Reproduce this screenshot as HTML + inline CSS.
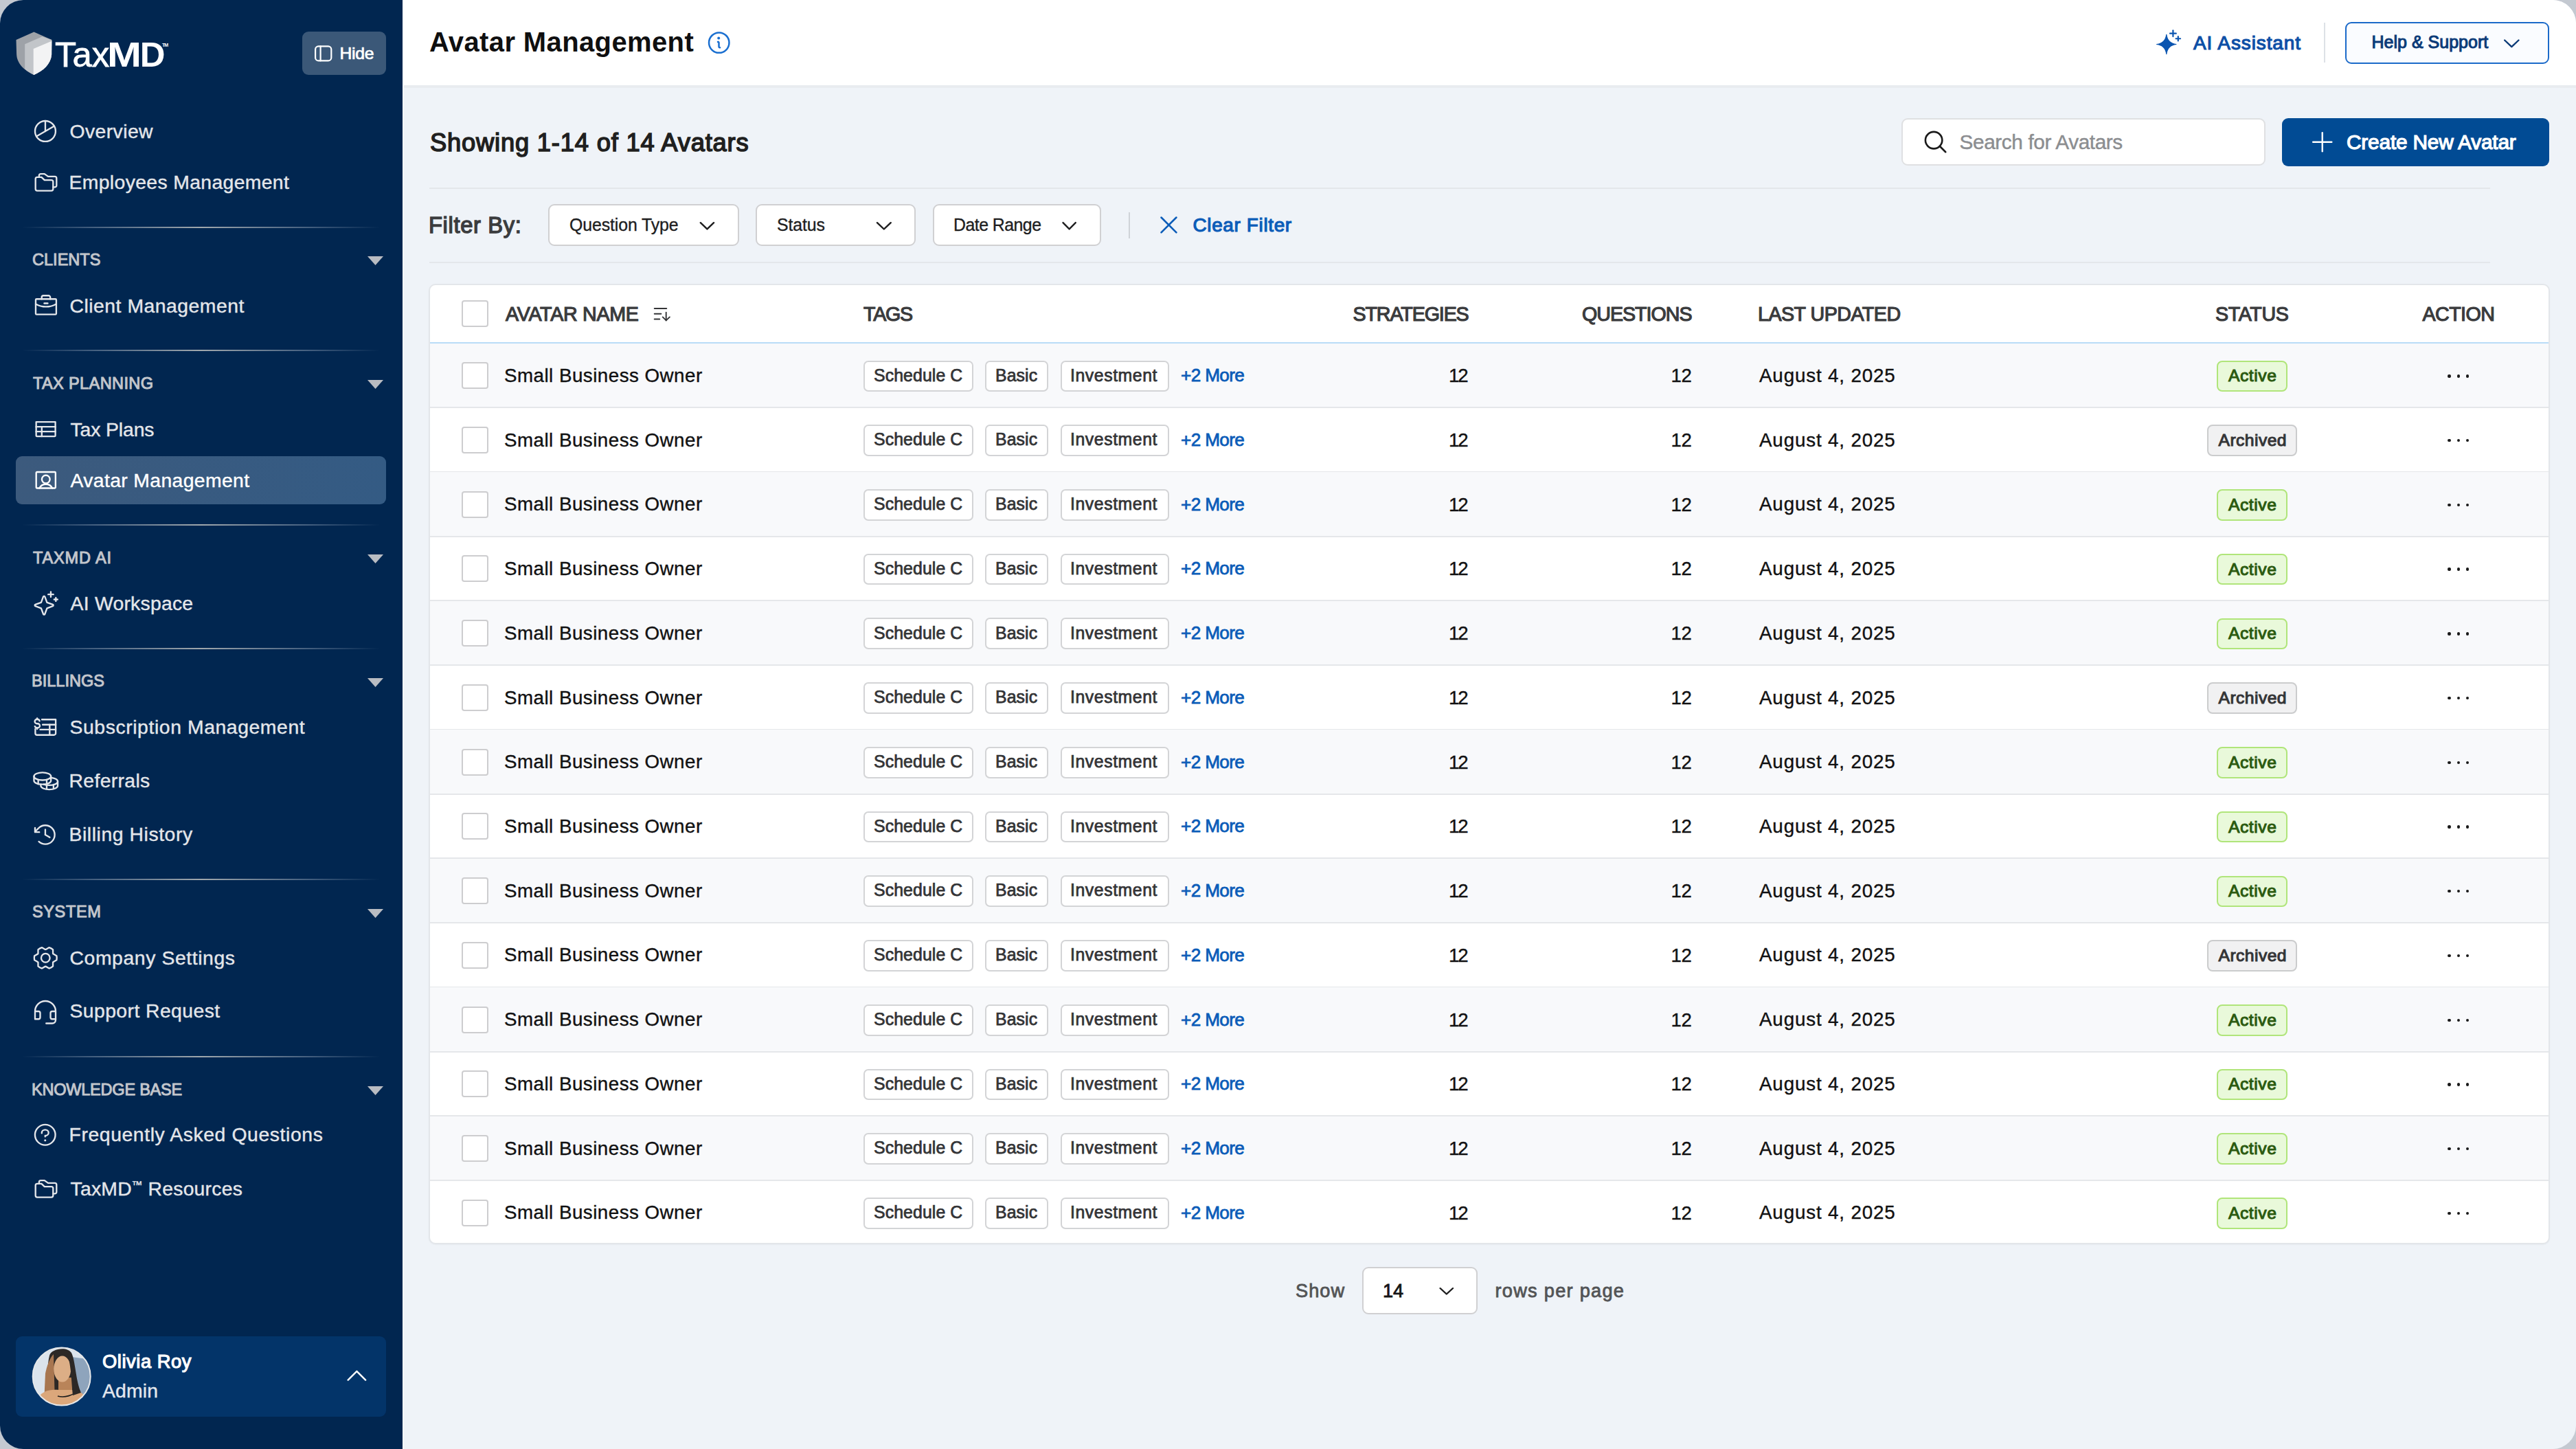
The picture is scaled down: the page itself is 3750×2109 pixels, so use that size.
<!DOCTYPE html>
<html><head><meta charset="utf-8"><title>Avatar Management</title>
<style>
html,body{margin:0;padding:0;}
body{width:3750px;height:2109px;overflow:hidden;background:#c4c9d1;font-family:"Liberation Sans",sans-serif;}
#app{position:absolute;left:0;top:0;width:3750px;height:2109px;border-radius:34px;overflow:hidden;background:#eff3f8;}
.t{position:absolute;white-space:nowrap;}
.b{position:absolute;box-sizing:border-box;}
</style></head><body><div id="app">
<div class="b" style="left:0.00px;top:0.00px;width:586.00px;height:2109.00px;background:#012650"></div><div class="b" style="left:586.00px;top:0.00px;width:2.20px;height:2109.00px;background:#ffffff"></div><svg style="position:absolute;left:15px;top:40px;width:70px;height:75px" viewBox="0 0 70 75"><path d="M34.4,6.5 L60.3,17.9 L60.1,39.4 C59,53 48,63 34.4,68.9 C21,63 9.5,53 9.1,38.8 L8.5,17.9 Z" fill="#9ea2a8"/><path d="M21.2,24.3 L46.5,13.2 L60.3,17.9 L60.1,39.4 C59,53 48,63 34.4,68.9 C30,67 25,64 21.2,60.5 Z" fill="#c2c5c9"/><path d="M33.7,31.1 L60.3,19.7 L60.1,39.4 C59,53 48,63 34.4,68.9 L33.7,68.5 Z" fill="#f3f3f4"/></svg><span id="logo1" class="t" style="left:80.00px;top:55.46px;font-size:50.87px;line-height:50.87px;font-weight:400;color:#ffffff;letter-spacing:0.000px;-webkit-text-stroke:0.8px #ffffff">Tax</span><span id="logo2" class="t" style="left:156.30px;top:55.46px;font-size:50.87px;line-height:50.87px;font-weight:700;color:#ffffff;letter-spacing:0.000px;"><span style="display:inline-block;transform:scaleX(1.18);transform-origin:0 0;margin-right:5px">M</span>D</span><span id="tm" class="t" style="left:236.00px;top:62.00px;font-size:7.00px;line-height:7.00px;font-weight:700;color:#ffffff;letter-spacing:-1.000px;">TM</span><div class="b" style="left:440.00px;top:46.00px;width:122.00px;height:63.00px;background:#3b5878;border-radius:9px"></div><svg style="position:absolute;left:450px;top:58px;width:40px;height:40px;overflow:visible" viewBox="0 0 40 40" fill="none" stroke="#ffffff" color="#ffffff" stroke-width="2.2" stroke-linecap="round" stroke-linejoin="round"><rect x="9.1" y="9.4" width="23.2" height="21" rx="4.5"/><line x1="16.6" y1="9.4" x2="16.6" y2="30.4"/></svg><span id="hide" class="t" style="left:494.50px;top:65.71px;font-size:24.71px;line-height:24.71px;font-weight:400;color:#ffffff;letter-spacing:-0.267px;-webkit-text-stroke:0.74px #ffffff;">Hide</span><span id="ov" class="t" style="left:101.50px;top:176.71px;font-size:28.34px;line-height:28.34px;font-weight:400;color:#e4e6ea;letter-spacing:0.429px;-webkit-text-stroke:0.40px #e4e6ea;">Overview</span><svg style="position:absolute;left:46.43px;top:170.93px;width:39.93px;height:39.93px;overflow:visible" viewBox="0 0 256 256" preserveAspectRatio="none" fill="none" stroke="#e4e6ea" color="#e4e6ea" stroke-width="15.07" stroke-linecap="round" stroke-linejoin="round"><circle cx="128" cy="128" r="96"/><line x1="128" y1="128" x2="128" y2="32"/><line x1="44.86" y1="176" x2="211.14" y2="80"/></svg><span id="emp" class="t" style="left:100.50px;top:250.90px;font-size:28.34px;line-height:28.34px;font-weight:400;color:#e4e6ea;letter-spacing:0.368px;-webkit-text-stroke:0.40px #e4e6ea;">Employees Management</span><svg style="position:absolute;left:40px;top:240px;width:60px;height:50px;overflow:visible" viewBox="0 0 60 50" fill="none" stroke="#e4e6ea" color="#e4e6ea" stroke-width="2.35" stroke-linecap="round" stroke-linejoin="round"><path d="M11.7,35.1V20.4a2.5,2.5,0,0,1,2.5-2.5H20.4L24.8,22.1H34.8a2.5,2.5,0,0,1,2.5,2.5V35.1a2.5,2.5,0,0,1-2.5,2.5H14.2a2.5,2.5,0,0,1-2.5-2.5Z"/><path d="M16.9,17.9V15.6a2.5,2.5,0,0,1,2.5-2.5H24.8L30,16.9H39.8a2.5,2.5,0,0,1,2.5,2.5V29.9a2.5,2.5,0,0,1-2.5,2.5H37.3"/></svg><div class="b" style="left:32.00px;top:330.10px;width:521.00px;height:1.80px;background:linear-gradient(90deg,rgba(150,165,185,0.0),rgba(150,165,185,0.45) 20%,rgba(200,200,196,0.8) 50%,rgba(150,165,185,0.45) 80%,rgba(150,165,185,0.0))"></div><span id="clients" class="t" style="left:47.00px;top:367.21px;font-size:23.55px;line-height:23.55px;font-weight:400;color:#c3c6cc;letter-spacing:0.000px;-webkit-text-stroke:0.99px #c3c6cc;">CLIENTS</span><svg style="position:absolute;left:535px;top:373.0px;width:23px;height:13px" viewBox="0 0 23 13"><path d="M0,0 L23,0 L11.5,13 Z" fill="#b9bcc2"/></svg><span id="cm" class="t" style="left:101.50px;top:430.90px;font-size:28.34px;line-height:28.34px;font-weight:400;color:#e4e6ea;letter-spacing:0.513px;-webkit-text-stroke:0.40px #e4e6ea;">Client Management</span><svg style="position:absolute;left:46.74px;top:423.89px;width:39.91px;height:39.91px;overflow:visible" viewBox="0 0 256 256" preserveAspectRatio="none" fill="none" stroke="#e4e6ea" color="#e4e6ea" stroke-width="15.07" stroke-linecap="round" stroke-linejoin="round"><rect x="32" y="72" width="192" height="144" rx="8"/><path d="M168,72V56a16,16,0,0,0-16-16H104A16,16,0,0,0,88,56V72"/><path d="M224,118.31A191.09,191.09,0,0,1,128,144a191.14,191.14,0,0,1-96-25.68"/><line x1="112" y1="112" x2="144" y2="112"/></svg><div class="b" style="left:32.00px;top:509.10px;width:521.00px;height:1.80px;background:linear-gradient(90deg,rgba(150,165,185,0.0),rgba(150,165,185,0.45) 20%,rgba(200,200,196,0.8) 50%,rgba(150,165,185,0.45) 80%,rgba(150,165,185,0.0))"></div><span id="taxp" class="t" style="left:48.00px;top:546.71px;font-size:23.55px;line-height:23.55px;font-weight:400;color:#c3c6cc;letter-spacing:0.364px;-webkit-text-stroke:0.99px #c3c6cc;">TAX PLANNING</span><svg style="position:absolute;left:535px;top:553.0px;width:23px;height:13px" viewBox="0 0 23 13"><path d="M0,0 L23,0 L11.5,13 Z" fill="#b9bcc2"/></svg><div class="b" style="left:23.00px;top:664.00px;width:539.00px;height:70.00px;background:linear-gradient(90deg,#3c5a7d,#345b84);border-radius:9px"></div><span id="tp" class="t" style="left:102.50px;top:610.90px;font-size:28.34px;line-height:28.34px;font-weight:400;color:#e4e6ea;letter-spacing:-0.100px;-webkit-text-stroke:0.40px #e4e6ea;">Tax Plans</span><svg style="position:absolute;left:47.86px;top:606.01px;width:37.28px;height:37.28px;overflow:visible" viewBox="0 0 256 256" preserveAspectRatio="none" fill="none" stroke="#e4e6ea" color="#e4e6ea" stroke-width="16.14" stroke-linecap="round" stroke-linejoin="round"><path d="M32,56H224V192a8,8,0,0,1-8,8H40a8,8,0,0,1-8-8V56Z"/><line x1="32" y1="104" x2="224" y2="104"/><line x1="32" y1="152" x2="224" y2="152"/><line x1="88" y1="104" x2="88" y2="200"/></svg><span id="am" class="t" style="left:102.50px;top:684.51px;font-size:28.34px;line-height:28.34px;font-weight:400;color:#ffffff;letter-spacing:0.375px;-webkit-text-stroke:0.40px #ffffff;">Avatar Management</span><svg style="position:absolute;left:47.92px;top:680.47px;width:37.57px;height:37.57px;overflow:visible" viewBox="0 0 256 256" preserveAspectRatio="none" fill="none" stroke="#ffffff" color="#ffffff" stroke-width="16.01" stroke-linecap="round" stroke-linejoin="round"><circle cx="128" cy="120" r="40"/><path d="M63.8,208a72,72,0,0,1,128.4,0"/><rect x="32" y="48" width="192" height="160" rx="8"/></svg><div class="b" style="left:32.00px;top:763.10px;width:521.00px;height:1.80px;background:linear-gradient(90deg,rgba(150,165,185,0.0),rgba(150,165,185,0.45) 20%,rgba(200,200,196,0.8) 50%,rgba(150,165,185,0.45) 80%,rgba(150,165,185,0.0))"></div><span id="taxai" class="t" style="left:48.00px;top:800.71px;font-size:23.55px;line-height:23.55px;font-weight:400;color:#c3c6cc;letter-spacing:0.857px;-webkit-text-stroke:0.99px #c3c6cc;">TAXMD AI</span><svg style="position:absolute;left:535px;top:807.0px;width:23px;height:13px" viewBox="0 0 23 13"><path d="M0,0 L23,0 L11.5,13 Z" fill="#b9bcc2"/></svg><span id="aiw" class="t" style="left:102.50px;top:864.31px;font-size:28.34px;line-height:28.34px;font-weight:400;color:#e4e6ea;letter-spacing:0.255px;-webkit-text-stroke:0.40px #e4e6ea;">AI Workspace</span><svg style="position:absolute;left:46.77px;top:859.15px;width:39.23px;height:39.23px;overflow:visible" viewBox="0 0 256 256" preserveAspectRatio="none" fill="none" stroke="#e4e6ea" color="#e4e6ea" stroke-width="15.34" stroke-linecap="round" stroke-linejoin="round"><path d="M84.27,171.73l-55.09-20.3a7.92,7.92,0,0,1,0-14.86l55.09-20.3,20.3-55.09a7.92,7.92,0,0,1,14.86,0l20.3,55.09,55.09,20.3a7.92,7.92,0,0,1,0,14.86l-55.09,20.3-20.3,55.09a7.92,7.92,0,0,1-14.86,0Z"/><line x1="176" y1="16" x2="176" y2="64"/><line x1="200" y1="40" x2="152" y2="40"/><line x1="224" y1="72" x2="224" y2="104"/><line x1="240" y1="88" x2="208" y2="88"/></svg><div class="b" style="left:32.00px;top:943.10px;width:521.00px;height:1.80px;background:linear-gradient(90deg,rgba(150,165,185,0.0),rgba(150,165,185,0.45) 20%,rgba(200,200,196,0.8) 50%,rgba(150,165,185,0.45) 80%,rgba(150,165,185,0.0))"></div><span id="bill" class="t" style="left:46.00px;top:980.41px;font-size:23.55px;line-height:23.55px;font-weight:400;color:#c3c6cc;letter-spacing:-0.000px;-webkit-text-stroke:0.99px #c3c6cc;">BILLINGS</span><svg style="position:absolute;left:535px;top:987.0px;width:23px;height:13px" viewBox="0 0 23 13"><path d="M0,0 L23,0 L11.5,13 Z" fill="#b9bcc2"/></svg><span id="sub" class="t" style="left:101.50px;top:1043.51px;font-size:28.34px;line-height:28.34px;font-weight:400;color:#e4e6ea;letter-spacing:0.591px;-webkit-text-stroke:0.40px #e4e6ea;">Subscription Management</span><svg style="position:absolute;left:40px;top:1030px;width:60px;height:50px;overflow:visible" viewBox="0 0 60 50" fill="none" stroke="#e4e6ea" color="#e4e6ea" stroke-width="2.35" stroke-linecap="round" stroke-linejoin="round"><path d="M21,17.25H41.1V37.2a2.5,2.5,0,0,1-2.5,2.5H13.9a2.5,2.5,0,0,1-2.5-2.5V31"/><line x1="22.1" y1="24.7" x2="41.1" y2="24.7"/><line x1="18.6" y1="31.9" x2="41.1" y2="31.9"/><line x1="32.3" y1="24.7" x2="32.3" y2="39.7"/><path d="M17.6,19.3a3.2,3.2,0,0,0-3.3-2.3h-0.6a3.1,3.1,0,0,0,0,6.2h1.2a3.1,3.1,0,0,1,0,6.2h-0.7a3.3,3.3,0,0,1-3.4-2.3"/><line x1="14.1" y1="15.3" x2="14.1" y2="17"/><line x1="14.1" y1="29.4" x2="14.1" y2="31.0"/></svg><span id="ref" class="t" style="left:100.50px;top:1121.60px;font-size:28.34px;line-height:28.34px;font-weight:400;color:#e4e6ea;letter-spacing:0.350px;-webkit-text-stroke:0.40px #e4e6ea;">Referrals</span><svg style="position:absolute;left:46.74px;top:1116.64px;width:39.52px;height:39.52px;overflow:visible" viewBox="0 0 256 256" preserveAspectRatio="none" fill="none" stroke="#e4e6ea" color="#e4e6ea" stroke-width="15.22" stroke-linecap="round" stroke-linejoin="round"><ellipse cx="96" cy="84" rx="80" ry="36"/><path d="M16,84v40c0,19.88,35.82,36,80,36s80-16.12,80-36V84"/><line x1="56" y1="117" x2="56" y2="157"/><path d="M176,96.72c36.52,3.34,64,17.86,64,35.28,0,19.88-35.82,36-80,36-19.6,0-37.56-3.17-51.47-8.44"/><path d="M80,159.28V172c0,19.88,35.82,36,80,36s80-16.12,80-36V132"/><line x1="200" y1="161" x2="200" y2="201"/><line x1="136" y1="117" x2="136" y2="201"/></svg><span id="bh" class="t" style="left:100.50px;top:1199.51px;font-size:28.34px;line-height:28.34px;font-weight:400;color:#e4e6ea;letter-spacing:0.571px;-webkit-text-stroke:0.40px #e4e6ea;">Billing History</span><svg style="position:absolute;left:46.18px;top:1194.85px;width:39.89px;height:39.89px;overflow:visible" viewBox="0 0 256 256" preserveAspectRatio="none" fill="none" stroke="#e4e6ea" color="#e4e6ea" stroke-width="15.08" stroke-linecap="round" stroke-linejoin="round"><line x1="128" y1="80" x2="128" y2="128"/><line x1="169.57" y1="152" x2="128" y2="128"/><polyline points="72 104 32 104 32 64"/><path d="M67.6,192A88,88,0,1,0,65.77,65.77L32,99.55"/></svg><div class="b" style="left:32.00px;top:1279.10px;width:521.00px;height:1.80px;background:linear-gradient(90deg,rgba(150,165,185,0.0),rgba(150,165,185,0.45) 20%,rgba(200,200,196,0.8) 50%,rgba(150,165,185,0.45) 80%,rgba(150,165,185,0.0))"></div><span id="sys" class="t" style="left:47.00px;top:1316.41px;font-size:23.55px;line-height:23.55px;font-weight:400;color:#c3c6cc;letter-spacing:0.600px;-webkit-text-stroke:0.99px #c3c6cc;">SYSTEM</span><svg style="position:absolute;left:535px;top:1323.0px;width:23px;height:13px" viewBox="0 0 23 13"><path d="M0,0 L23,0 L11.5,13 Z" fill="#b9bcc2"/></svg><span id="cs" class="t" style="left:101.50px;top:1379.90px;font-size:28.34px;line-height:28.34px;font-weight:400;color:#e4e6ea;letter-spacing:0.600px;-webkit-text-stroke:0.40px #e4e6ea;">Company Settings</span><svg style="position:absolute;left:45.77px;top:1374.12px;width:40.55px;height:40.55px;overflow:visible" viewBox="0 0 256 256" preserveAspectRatio="none" fill="none" stroke="#e4e6ea" color="#e4e6ea" stroke-width="14.84" stroke-linecap="round" stroke-linejoin="round"><circle cx="128" cy="128" r="40"/><path d="M130.05,206.11c-1.34,0-2.69,0-4,0L94,224a104.61,104.61,0,0,1-34.11-19.2l-.12-36c-.71-1.12-1.38-2.25-2-3.41L25.9,147.24a99.15,99.15,0,0,1,0-38.46l31.84-18.1c.65-1.150,1.32-2.29,2-3.41l.16-36A104.58,104.58,0,0,1,94,32l32,17.89c1.34,0,2.69,0,4,0L162,32a104.61,104.61,0,0,1,34.11,19.2l.12,36c.71,1.12,1.38,2.25,2,3.41l31.8,18.1a99.15,99.15,0,0,1,0,38.46l-31.84,18.1c-.65,1.15-1.32,2.29-2,3.41l-.16,36A104.58,104.580,0,0,1,162,224Z"/></svg><span id="sr" class="t" style="left:101.50px;top:1457.40px;font-size:28.34px;line-height:28.34px;font-weight:400;color:#e4e6ea;letter-spacing:0.429px;-webkit-text-stroke:0.40px #e4e6ea;">Support Request</span><svg style="position:absolute;left:46.14px;top:1452.19px;width:40.03px;height:40.03px;overflow:visible" viewBox="0 0 256 256" preserveAspectRatio="none" fill="none" stroke="#e4e6ea" color="#e4e6ea" stroke-width="15.03" stroke-linecap="round" stroke-linejoin="round"><path d="M224,128H192a16,16,0,0,0-16,16v40a16,16,0,0,0,16,16h32V128a96,96,0,1,0-192,0v72H64a16,16,0,0,0,16-16V144a16,16,0,0,0-16-16H32"/><path d="M224,200v8a32,32,0,0,1-32,32H136"/></svg><div class="b" style="left:32.00px;top:1537.10px;width:521.00px;height:1.80px;background:linear-gradient(90deg,rgba(150,165,185,0.0),rgba(150,165,185,0.45) 20%,rgba(200,200,196,0.8) 50%,rgba(150,165,185,0.45) 80%,rgba(150,165,185,0.0))"></div><span id="kb" class="t" style="left:46.00px;top:1574.71px;font-size:23.55px;line-height:23.55px;font-weight:400;color:#c3c6cc;letter-spacing:-0.246px;-webkit-text-stroke:0.99px #c3c6cc;">KNOWLEDGE BASE</span><svg style="position:absolute;left:535px;top:1581.0px;width:23px;height:13px" viewBox="0 0 23 13"><path d="M0,0 L23,0 L11.5,13 Z" fill="#b9bcc2"/></svg><span id="faq" class="t" style="left:100.50px;top:1637.31px;font-size:28.34px;line-height:28.34px;font-weight:400;color:#e4e6ea;letter-spacing:0.600px;-webkit-text-stroke:0.40px #e4e6ea;">Frequently Asked Questions</span><svg style="position:absolute;left:46.23px;top:1632.23px;width:39.53px;height:39.53px;overflow:visible" viewBox="0 0 256 256" preserveAspectRatio="none" fill="none" stroke="#e4e6ea" color="#e4e6ea" stroke-width="15.22" stroke-linecap="round" stroke-linejoin="round"><circle cx="128" cy="128" r="96"/><circle cx="128" cy="180" r="10" fill="currentColor" stroke="none"/><path d="M128,144v-8c17.67,0,32-12.54,32-28s-14.33-28-32-28S96,92.54,96,108v4"/></svg><span id="res" class="t" style="left:102.50px;top:1710.95px;font-size:28.34px;line-height:28.34px;font-weight:400;color:#e4e6ea;letter-spacing:0.240px;-webkit-text-stroke:0.40px #e4e6ea;">TaxMD<span style="font-size:55%;vertical-align:0.62em;letter-spacing:0">™</span> Resources</span><svg style="position:absolute;left:40px;top:1705px;width:60px;height:50px;overflow:visible" viewBox="0 0 60 50" fill="none" stroke="#e4e6ea" color="#e4e6ea" stroke-width="2.35" stroke-linecap="round" stroke-linejoin="round"><path d="M11.7,35.1V20.4a2.5,2.5,0,0,1,2.5-2.5H20.4L24.8,22.1H34.8a2.5,2.5,0,0,1,2.5,2.5V35.1a2.5,2.5,0,0,1-2.5,2.5H14.2a2.5,2.5,0,0,1-2.5-2.5Z"/><path d="M16.9,17.9V15.6a2.5,2.5,0,0,1,2.5-2.5H24.8L30,16.9H39.8a2.5,2.5,0,0,1,2.5,2.5V29.9a2.5,2.5,0,0,1-2.5,2.5H37.3"/></svg><div class="b" style="left:23.00px;top:1945.00px;width:539.00px;height:117.00px;background:#033469;border-radius:9px"></div><svg style="position:absolute;left:46px;top:1959px;width:88px;height:88px" viewBox="0 0 88 88"><defs><clipPath id="cc"><circle cx="43.7" cy="44.5" r="41.8"/></clipPath></defs><g clip-path="url(#cc)"><rect width="88" height="88" fill="#dbe3ec"/><path d="M58,16 L88,20 L88,80 L58,80 Z" fill="#8ea4bc"/><path d="M26,14 C28,4 52,0 58,10 C64,22 64,50 72,68 L60,74 L30,80 C22,60 22,30 26,14 Z" fill="#2c2826"/><path d="M20,40 C22,30 26,18 32,12 L34,84 L18,84 Z" fill="#a87650"/><rect x="39" y="46" width="20" height="26" fill="#b98459"/><ellipse cx="44.7" cy="33.6" rx="12.5" ry="19" fill="#dcae86"/><path d="M4,88 C8,70 20,62 40,64 L62,64 C74,66 80,74 84,88 Z" fill="#dba77b"/><path d="M38,73 C48,76 60,72 70,64" stroke="#1c1c1c" stroke-width="1.6" fill="none"/><path d="M52,10 C60,20 62,46 66,62 L72,68 L60,72 C58,56 58,30 52,10 Z" fill="#2c2826"/></g><circle cx="43.7" cy="44.5" r="42" fill="none" stroke="#e6e8ea" stroke-width="2"/></svg><span id="olivia" class="t" style="left:149.00px;top:1968.01px;font-size:27.33px;line-height:27.33px;font-weight:400;color:#ffffff;letter-spacing:0.556px;-webkit-text-stroke:1.15px #ffffff;">Olivia Roy</span><span id="admin" class="t" style="left:149.00px;top:2010.31px;font-size:28.34px;line-height:28.34px;font-weight:400;color:#e3e7ee;letter-spacing:0.150px;-webkit-text-stroke:0.40px #e3e7ee;">Admin</span><svg style="position:absolute;left:499.05px;top:1982.70px;width:40.80px;height:40.96px;overflow:visible" viewBox="0 0 256 256" preserveAspectRatio="none" fill="none" stroke="#ffffff" color="#ffffff" stroke-width="15.03" stroke-linecap="round" stroke-linejoin="round"><polyline points="48 160 128 80 208 160"/></svg><div class="b" style="left:588.20px;top:0.00px;width:3161.80px;height:123.50px;background:#ffffff"></div><div class="b" style="left:588.20px;top:123.50px;width:3161.80px;height:4.00px;background:#e9ecf0"></div><span id="title" class="t" style="left:625.00px;top:42.41px;font-size:39.97px;line-height:39.97px;font-weight:700;color:#0f0f10;letter-spacing:0.400px;">Avatar Management</span><svg style="position:absolute;left:1020px;top:35px;width:55px;height:55px;overflow:visible" viewBox="0 0 55 55" fill="none" stroke="#1a6fd0" color="#1a6fd0" stroke-width="2.5" stroke-linecap="round" stroke-linejoin="round"><circle cx="26.75" cy="27.15" r="14.7"/><path d="M25,25.9a1.2,1.2,0,0,1,1.5,1.2V32.5a1.8,1.8,0,0,0,1.6,1.8"/><circle cx="26.2" cy="20.6" r="2" fill="#1a6fd0" stroke="none"/></svg><svg style="position:absolute;left:3130px;top:35px;width:55px;height:55px;overflow:visible" viewBox="0 0 55 55"><path d="M23.8,15.3 C24.8,23.5 29.8,28.5 38.0,29.5 C29.8,30.5 24.8,35.5 23.8,43.7 C22.8,35.5 17.8,30.5 9.6,29.5 C17.8,28.5 22.8,23.5 23.8,15.3 Z" fill="#0b55b0" stroke="#0b55b0" stroke-width="1.2" stroke-linejoin="round"/><g stroke="#0b55b0" stroke-width="2.2" stroke-linecap="round"><line x1="33.4" y1="9.3" x2="33.4" y2="18.1"/><line x1="29.0" y1="13.7" x2="37.8" y2="13.7"/><line x1="40.8" y1="18.0" x2="40.8" y2="24.5"/><line x1="37.55" y1="21.25" x2="44.05" y2="21.25"/></g></svg><span id="aias" class="t" style="left:3193.00px;top:48.60px;font-size:27.91px;line-height:27.91px;font-weight:400;color:#0d4fa6;letter-spacing:0.927px;-webkit-text-stroke:1.17px #0d4fa6;">AI Assistant</span><div class="b" style="left:3383.00px;top:33.00px;width:2.00px;height:58.00px;background:#dde1e6"></div><div class="b" style="left:3414.00px;top:31.50px;width:296.60px;height:61.90px;border:2px solid #1b6ac9;border-radius:9px;background:#fafcff"></div><span id="help" class="t" style="left:3452.50px;top:49.41px;font-size:25.00px;line-height:25.00px;font-weight:400;color:#0b3b78;letter-spacing:0.015px;-webkit-text-stroke:1.05px #0b3b78;">Help &amp; Support</span><svg style="position:absolute;left:3640.03px;top:47.13px;width:32.64px;height:30.72px;overflow:visible" viewBox="0 0 256 256" preserveAspectRatio="none" fill="none" stroke="#0b3b78" color="#0b3b78" stroke-width="18.59" stroke-linecap="round" stroke-linejoin="round"><polyline points="208 96 128 176 48 96"/></svg><span id="showing" class="t" style="left:626.00px;top:189.70px;font-size:36.34px;line-height:36.34px;font-weight:400;color:#1f1f20;letter-spacing:0.800px;-webkit-text-stroke:1.53px #1f1f20;">Showing 1-14 of 14 Avatars</span><div class="b" style="left:2768.00px;top:172.00px;width:530.00px;height:69.00px;background:#ffffff;border:2px solid #dfe0e2;border-radius:9px"></div><svg style="position:absolute;left:2798.23px;top:187.18px;width:39.13px;height:39.13px;overflow:visible" viewBox="0 0 256 256" preserveAspectRatio="none" fill="none" stroke="#1a1a1a" color="#1a1a1a" stroke-width="17.01" stroke-linecap="round" stroke-linejoin="round"><circle cx="112" cy="112" r="80"/><line x1="168.57" y1="168.57" x2="224" y2="224"/></svg><span id="search" class="t" style="left:2852.50px;top:192.10px;font-size:29.80px;line-height:29.80px;font-weight:400;color:#8b8d90;letter-spacing:-0.400px;-webkit-text-stroke:0.42px #8b8d90;">Search for Avatars</span><div class="b" style="left:3322.00px;top:171.60px;width:389.00px;height:70.40px;background:#014b94;border-radius:9px"></div><svg style="position:absolute;left:3361.05px;top:187.30px;width:39.49px;height:39.49px;overflow:visible" viewBox="0 0 256 256" preserveAspectRatio="none" fill="none" stroke="#ffffff" color="#ffffff" stroke-width="15.56" stroke-linecap="round" stroke-linejoin="round"><line x1="40" y1="128" x2="216" y2="128"/><line x1="128" y1="40" x2="128" y2="216"/></svg><span id="create" class="t" style="left:3416.00px;top:192.10px;font-size:29.80px;line-height:29.80px;font-weight:400;color:#ffffff;letter-spacing:-0.175px;-webkit-text-stroke:1.25px #ffffff;">Create New Avatar</span><div class="b" style="left:625.00px;top:273.00px;width:3000.00px;height:2.30px;background:#e4e7eb"></div><span id="filterby" class="t" style="left:624.00px;top:312.32px;font-size:32.70px;line-height:32.70px;font-weight:400;color:#3b3c3e;letter-spacing:0.644px;-webkit-text-stroke:1.37px #3b3c3e;">Filter By:</span><div class="b" style="left:798.00px;top:297.30px;width:277.50px;height:61.00px;background:#ffffff;border:2px solid #d0d0d2;border-radius:9px"></div><span id="qt" class="t" style="left:829.00px;top:315.71px;font-size:24.85px;line-height:24.85px;font-weight:400;color:#1e1e1f;letter-spacing:-0.100px;-webkit-text-stroke:0.35px #1e1e1f;">Question Type</span><svg style="position:absolute;left:1013.91px;top:313.04px;width:30.88px;height:29.76px;overflow:visible" viewBox="0 0 256 256" preserveAspectRatio="none" fill="none" stroke="#1e1e1f" color="#1e1e1f" stroke-width="20.26" stroke-linecap="round" stroke-linejoin="round"><polyline points="208 96 128 176 48 96"/></svg><div class="b" style="left:1100.00px;top:297.30px;width:233.00px;height:61.00px;background:#ffffff;border:2px solid #d0d0d2;border-radius:9px"></div><span id="st" class="t" style="left:1131.00px;top:315.71px;font-size:24.85px;line-height:24.85px;font-weight:400;color:#1e1e1f;letter-spacing:-0.080px;-webkit-text-stroke:0.35px #1e1e1f;">Status</span><svg style="position:absolute;left:1271.06px;top:313.04px;width:31.68px;height:29.76px;overflow:visible" viewBox="0 0 256 256" preserveAspectRatio="none" fill="none" stroke="#1e1e1f" color="#1e1e1f" stroke-width="20.00" stroke-linecap="round" stroke-linejoin="round"><polyline points="208 96 128 176 48 96"/></svg><div class="b" style="left:1358.00px;top:297.30px;width:244.70px;height:61.00px;background:#ffffff;border:2px solid #d0d0d2;border-radius:9px"></div><span id="dr" class="t" style="left:1388.00px;top:315.71px;font-size:24.85px;line-height:24.85px;font-weight:400;color:#1e1e1f;letter-spacing:-0.511px;-webkit-text-stroke:0.35px #1e1e1f;">Date Range</span><svg style="position:absolute;left:1542.01px;top:313.04px;width:29.28px;height:29.76px;overflow:visible" viewBox="0 0 256 256" preserveAspectRatio="none" fill="none" stroke="#1e1e1f" color="#1e1e1f" stroke-width="20.81" stroke-linecap="round" stroke-linejoin="round"><polyline points="208 96 128 176 48 96"/></svg><div class="b" style="left:1642.50px;top:308.60px;width:2.00px;height:38.20px;background:#cfd3d8"></div><svg style="position:absolute;left:1681.58px;top:308.28px;width:38.93px;height:38.93px;overflow:visible" viewBox="0 0 256 256" preserveAspectRatio="none" fill="none" stroke="#0b5cb8" color="#0b5cb8" stroke-width="17.10" stroke-linecap="round" stroke-linejoin="round"><line x1="200" y1="56" x2="56" y2="200"/><line x1="200" y1="200" x2="56" y2="56"/></svg><span id="clear" class="t" style="left:1736.50px;top:314.00px;font-size:27.91px;line-height:27.91px;font-weight:400;color:#0b5cb8;letter-spacing:0.655px;-webkit-text-stroke:1.17px #0b5cb8;">Clear Filter</span><div class="b" style="left:625.00px;top:380.50px;width:3000.00px;height:2.30px;background:#e4e7eb"></div><div class="b" style="left:624.00px;top:413.40px;width:3087.80px;height:1398.10px;background:#ffffff;border:2px solid #e3e6ea;border-radius:10px;box-shadow:0 1px 2px rgba(0,0,0,0.04)"></div><div class="b" style="left:626.00px;top:497.50px;width:3083.80px;height:2.50px;background:#b9dcf7"></div><div class="b" style="left:672.00px;top:437.30px;width:39.00px;height:38.50px;background:#ffffff;border:2px solid #cdcdcf;border-radius:4px"></div><span id="h_name" class="t" style="left:736.00px;top:442.51px;font-size:28.63px;line-height:28.63px;font-weight:400;color:#3a3b3d;letter-spacing:-0.280px;-webkit-text-stroke:1.20px #3a3b3d;">AVATAR NAME</span><svg style="position:absolute;left:940px;top:435px;width:50px;height:45px;overflow:visible" viewBox="0 0 50 45" fill="none" stroke="#333436" color="#333436" stroke-width="1.9" stroke-linecap="round" stroke-linejoin="round"><line x1="12.7" y1="14" x2="30.3" y2="14"/><line x1="12.7" y1="21.7" x2="22.4" y2="21.7"/><line x1="12.7" y1="29.5" x2="20.3" y2="29.5"/><line x1="29.7" y1="19.7" x2="29.7" y2="31.4"/><polyline points="24.7 26.4 29.7 31.4 34.9 26.4"/></svg><span id="h_tags" class="t" style="left:1257.00px;top:442.51px;font-size:28.63px;line-height:28.63px;font-weight:400;color:#3a3b3d;letter-spacing:-1.200px;-webkit-text-stroke:1.20px #3a3b3d;">TAGS</span><span id="h_str" class="t" style="left:1969.50px;top:442.51px;font-size:28.63px;line-height:28.63px;font-weight:400;color:#3a3b3d;letter-spacing:-1.111px;-webkit-text-stroke:1.20px #3a3b3d;">STRATEGIES</span><span id="h_q" class="t" style="left:2303.00px;top:442.51px;font-size:28.63px;line-height:28.63px;font-weight:400;color:#3a3b3d;letter-spacing:-1.000px;-webkit-text-stroke:1.20px #3a3b3d;">QUESTIONS</span><span id="h_lu" class="t" style="left:2559.00px;top:442.51px;font-size:28.63px;line-height:28.63px;font-weight:400;color:#3a3b3d;letter-spacing:-0.509px;-webkit-text-stroke:1.20px #3a3b3d;">LAST UPDATED</span><span id="h_st" class="t" style="left:3225.00px;top:442.51px;font-size:28.63px;line-height:28.63px;font-weight:400;color:#3a3b3d;letter-spacing:-0.360px;-webkit-text-stroke:1.20px #3a3b3d;">STATUS</span><span id="h_ac" class="t" style="left:3526.50px;top:442.51px;font-size:28.63px;line-height:28.63px;font-weight:400;color:#3a3b3d;letter-spacing:-0.560px;-webkit-text-stroke:1.20px #3a3b3d;">ACTION</span><div class="b" style="left:626.00px;top:500.00px;width:3083.80px;height:92.23px;background:#f8f9fb"></div><div class="b" style="left:626.00px;top:592.23px;width:3083.80px;height:2.00px;background:#e5e7ea"></div><div class="b" style="left:672.00px;top:527.30px;width:39.00px;height:39.00px;background:#ffffff;border:2px solid #cdcdcf;border-radius:4px"></div><span id="r0_name" class="t" style="left:734.00px;top:532.91px;font-size:27.76px;line-height:27.76px;font-weight:400;color:#111112;letter-spacing:0.474px;-webkit-text-stroke:0.39px #111112;">Small Business Owner</span><div class="b" style="left:1256.80px;top:524.50px;width:160.20px;height:45.80px;background:#ffffff;border:2px solid #d3d4d6;border-radius:7px"></div><span id="r0_sc" class="t" style="left:1272.00px;top:534.60px;font-size:24.85px;line-height:24.85px;font-weight:400;color:#333436;letter-spacing:0.089px;-webkit-text-stroke:0.75px #333436;">Schedule C</span><div class="b" style="left:1433.80px;top:524.50px;width:92.40px;height:45.80px;background:#ffffff;border:2px solid #d3d4d6;border-radius:7px"></div><span id="r0_ba" class="t" style="left:1449.00px;top:534.60px;font-size:24.85px;line-height:24.85px;font-weight:400;color:#333436;letter-spacing:0.100px;-webkit-text-stroke:0.75px #333436;">Basic</span><div class="b" style="left:1543.70px;top:524.50px;width:158.40px;height:45.80px;background:#ffffff;border:2px solid #d3d4d6;border-radius:7px"></div><span id="r0_inv" class="t" style="left:1558.00px;top:534.60px;font-size:24.85px;line-height:24.85px;font-weight:400;color:#333436;letter-spacing:0.556px;-webkit-text-stroke:0.75px #333436;">Investment</span><span id="r0_more" class="t" style="left:1719.00px;top:533.21px;font-size:26.16px;line-height:26.16px;font-weight:400;color:#0b5cb8;letter-spacing:-0.633px;-webkit-text-stroke:0.78px #0b5cb8;">+2 More</span><span id="r0_s" class="t" style="left:2109.00px;top:533.20px;font-size:27.62px;line-height:27.62px;font-weight:400;color:#111112;letter-spacing:-2.200px;-webkit-text-stroke:0.39px #111112;">12</span><span id="r0_q" class="t" style="left:2432.50px;top:533.20px;font-size:27.62px;line-height:27.62px;font-weight:400;color:#111112;letter-spacing:-0.400px;-webkit-text-stroke:0.39px #111112;">12</span><span id="r0_d" class="t" style="left:2561.00px;top:532.91px;font-size:27.76px;line-height:27.76px;font-weight:400;color:#111112;letter-spacing:0.846px;-webkit-text-stroke:0.39px #111112;">August 4, 2025</span><div class="b" style="left:3226.50px;top:524.70px;width:103.10px;height:45.50px;background:#e9f9da;border:2px solid #b0e57a;border-radius:8px"></div><span id="r0_b" class="t" style="left:3244.00px;top:535.41px;font-size:24.71px;line-height:24.71px;font-weight:400;color:#2b5a10;letter-spacing:0.520px;-webkit-text-stroke:1.04px #2b5a10;">Active</span><div class="b" style="left:3563.40px;top:545.20px;width:4.40px;height:4.40px;background:#1a1a1a;border-radius:50%"></div><div class="b" style="left:3576.50px;top:545.20px;width:4.40px;height:4.40px;background:#1a1a1a;border-radius:50%"></div><div class="b" style="left:3589.60px;top:545.20px;width:4.40px;height:4.40px;background:#1a1a1a;border-radius:50%"></div><div class="b" style="left:626.00px;top:685.96px;width:3083.80px;height:2.00px;background:#e5e7ea"></div><div class="b" style="left:672.00px;top:621.03px;width:39.00px;height:39.00px;background:#ffffff;border:2px solid #cdcdcf;border-radius:4px"></div><span id="r1_name" class="t" style="left:734.00px;top:626.65px;font-size:27.76px;line-height:27.76px;font-weight:400;color:#111112;letter-spacing:0.474px;-webkit-text-stroke:0.39px #111112;">Small Business Owner</span><div class="b" style="left:1256.80px;top:618.23px;width:160.20px;height:45.80px;background:#ffffff;border:2px solid #d3d4d6;border-radius:7px"></div><span id="r1_sc" class="t" style="left:1272.00px;top:628.34px;font-size:24.85px;line-height:24.85px;font-weight:400;color:#333436;letter-spacing:0.089px;-webkit-text-stroke:0.75px #333436;">Schedule C</span><div class="b" style="left:1433.80px;top:618.23px;width:92.40px;height:45.80px;background:#ffffff;border:2px solid #d3d4d6;border-radius:7px"></div><span id="r1_ba" class="t" style="left:1449.00px;top:628.34px;font-size:24.85px;line-height:24.85px;font-weight:400;color:#333436;letter-spacing:0.100px;-webkit-text-stroke:0.75px #333436;">Basic</span><div class="b" style="left:1543.70px;top:618.23px;width:158.40px;height:45.80px;background:#ffffff;border:2px solid #d3d4d6;border-radius:7px"></div><span id="r1_inv" class="t" style="left:1558.00px;top:628.34px;font-size:24.85px;line-height:24.85px;font-weight:400;color:#333436;letter-spacing:0.556px;-webkit-text-stroke:0.75px #333436;">Investment</span><span id="r1_more" class="t" style="left:1719.00px;top:626.94px;font-size:26.16px;line-height:26.16px;font-weight:400;color:#0b5cb8;letter-spacing:-0.633px;-webkit-text-stroke:0.78px #0b5cb8;">+2 More</span><span id="r1_s" class="t" style="left:2109.00px;top:626.94px;font-size:27.62px;line-height:27.62px;font-weight:400;color:#111112;letter-spacing:-2.200px;-webkit-text-stroke:0.39px #111112;">12</span><span id="r1_q" class="t" style="left:2432.50px;top:626.94px;font-size:27.62px;line-height:27.62px;font-weight:400;color:#111112;letter-spacing:-0.400px;-webkit-text-stroke:0.39px #111112;">12</span><span id="r1_d" class="t" style="left:2561.00px;top:626.65px;font-size:27.76px;line-height:27.76px;font-weight:400;color:#111112;letter-spacing:0.846px;-webkit-text-stroke:0.39px #111112;">August 4, 2025</span><div class="b" style="left:3212.50px;top:618.43px;width:131.60px;height:45.50px;background:#f1f1f2;border:2px solid #cbcccd;border-radius:8px"></div><span id="r1_b" class="t" style="left:3229.50px;top:629.15px;font-size:24.71px;line-height:24.71px;font-weight:400;color:#343537;letter-spacing:0.429px;-webkit-text-stroke:1.04px #343537;">Archived</span><div class="b" style="left:3563.40px;top:638.93px;width:4.40px;height:4.40px;background:#1a1a1a;border-radius:50%"></div><div class="b" style="left:3576.50px;top:638.93px;width:4.40px;height:4.40px;background:#1a1a1a;border-radius:50%"></div><div class="b" style="left:3589.60px;top:638.93px;width:4.40px;height:4.40px;background:#1a1a1a;border-radius:50%"></div><div class="b" style="left:626.00px;top:687.46px;width:3083.80px;height:92.23px;background:#f8f9fb"></div><div class="b" style="left:626.00px;top:779.69px;width:3083.80px;height:2.00px;background:#e5e7ea"></div><div class="b" style="left:672.00px;top:714.76px;width:39.00px;height:39.00px;background:#ffffff;border:2px solid #cdcdcf;border-radius:4px"></div><span id="r2_name" class="t" style="left:734.00px;top:720.37px;font-size:27.76px;line-height:27.76px;font-weight:400;color:#111112;letter-spacing:0.474px;-webkit-text-stroke:0.39px #111112;">Small Business Owner</span><div class="b" style="left:1256.80px;top:711.96px;width:160.20px;height:45.80px;background:#ffffff;border:2px solid #d3d4d6;border-radius:7px"></div><span id="r2_sc" class="t" style="left:1272.00px;top:722.06px;font-size:24.85px;line-height:24.85px;font-weight:400;color:#333436;letter-spacing:0.089px;-webkit-text-stroke:0.75px #333436;">Schedule C</span><div class="b" style="left:1433.80px;top:711.96px;width:92.40px;height:45.80px;background:#ffffff;border:2px solid #d3d4d6;border-radius:7px"></div><span id="r2_ba" class="t" style="left:1449.00px;top:722.06px;font-size:24.85px;line-height:24.85px;font-weight:400;color:#333436;letter-spacing:0.100px;-webkit-text-stroke:0.75px #333436;">Basic</span><div class="b" style="left:1543.70px;top:711.96px;width:158.40px;height:45.80px;background:#ffffff;border:2px solid #d3d4d6;border-radius:7px"></div><span id="r2_inv" class="t" style="left:1558.00px;top:722.06px;font-size:24.85px;line-height:24.85px;font-weight:400;color:#333436;letter-spacing:0.556px;-webkit-text-stroke:0.75px #333436;">Investment</span><span id="r2_more" class="t" style="left:1719.00px;top:720.66px;font-size:26.16px;line-height:26.16px;font-weight:400;color:#0b5cb8;letter-spacing:-0.633px;-webkit-text-stroke:0.78px #0b5cb8;">+2 More</span><span id="r2_s" class="t" style="left:2109.00px;top:720.66px;font-size:27.62px;line-height:27.62px;font-weight:400;color:#111112;letter-spacing:-2.200px;-webkit-text-stroke:0.39px #111112;">12</span><span id="r2_q" class="t" style="left:2432.50px;top:720.66px;font-size:27.62px;line-height:27.62px;font-weight:400;color:#111112;letter-spacing:-0.400px;-webkit-text-stroke:0.39px #111112;">12</span><span id="r2_d" class="t" style="left:2561.00px;top:720.37px;font-size:27.76px;line-height:27.76px;font-weight:400;color:#111112;letter-spacing:0.846px;-webkit-text-stroke:0.39px #111112;">August 4, 2025</span><div class="b" style="left:3226.50px;top:712.16px;width:103.10px;height:45.50px;background:#e9f9da;border:2px solid #b0e57a;border-radius:8px"></div><span id="r2_b" class="t" style="left:3244.00px;top:722.87px;font-size:24.71px;line-height:24.71px;font-weight:400;color:#2b5a10;letter-spacing:0.520px;-webkit-text-stroke:1.04px #2b5a10;">Active</span><div class="b" style="left:3563.40px;top:732.66px;width:4.40px;height:4.40px;background:#1a1a1a;border-radius:50%"></div><div class="b" style="left:3576.50px;top:732.66px;width:4.40px;height:4.40px;background:#1a1a1a;border-radius:50%"></div><div class="b" style="left:3589.60px;top:732.66px;width:4.40px;height:4.40px;background:#1a1a1a;border-radius:50%"></div><div class="b" style="left:626.00px;top:873.42px;width:3083.80px;height:2.00px;background:#e5e7ea"></div><div class="b" style="left:672.00px;top:808.49px;width:39.00px;height:39.00px;background:#ffffff;border:2px solid #cdcdcf;border-radius:4px"></div><span id="r3_name" class="t" style="left:734.00px;top:814.11px;font-size:27.76px;line-height:27.76px;font-weight:400;color:#111112;letter-spacing:0.474px;-webkit-text-stroke:0.39px #111112;">Small Business Owner</span><div class="b" style="left:1256.80px;top:805.69px;width:160.20px;height:45.80px;background:#ffffff;border:2px solid #d3d4d6;border-radius:7px"></div><span id="r3_sc" class="t" style="left:1272.00px;top:815.80px;font-size:24.85px;line-height:24.85px;font-weight:400;color:#333436;letter-spacing:0.089px;-webkit-text-stroke:0.75px #333436;">Schedule C</span><div class="b" style="left:1433.80px;top:805.69px;width:92.40px;height:45.80px;background:#ffffff;border:2px solid #d3d4d6;border-radius:7px"></div><span id="r3_ba" class="t" style="left:1449.00px;top:815.80px;font-size:24.85px;line-height:24.85px;font-weight:400;color:#333436;letter-spacing:0.100px;-webkit-text-stroke:0.75px #333436;">Basic</span><div class="b" style="left:1543.70px;top:805.69px;width:158.40px;height:45.80px;background:#ffffff;border:2px solid #d3d4d6;border-radius:7px"></div><span id="r3_inv" class="t" style="left:1558.00px;top:815.80px;font-size:24.85px;line-height:24.85px;font-weight:400;color:#333436;letter-spacing:0.556px;-webkit-text-stroke:0.75px #333436;">Investment</span><span id="r3_more" class="t" style="left:1719.00px;top:814.40px;font-size:26.16px;line-height:26.16px;font-weight:400;color:#0b5cb8;letter-spacing:-0.633px;-webkit-text-stroke:0.78px #0b5cb8;">+2 More</span><span id="r3_s" class="t" style="left:2109.00px;top:814.40px;font-size:27.62px;line-height:27.62px;font-weight:400;color:#111112;letter-spacing:-2.200px;-webkit-text-stroke:0.39px #111112;">12</span><span id="r3_q" class="t" style="left:2432.50px;top:814.40px;font-size:27.62px;line-height:27.62px;font-weight:400;color:#111112;letter-spacing:-0.400px;-webkit-text-stroke:0.39px #111112;">12</span><span id="r3_d" class="t" style="left:2561.00px;top:814.11px;font-size:27.76px;line-height:27.76px;font-weight:400;color:#111112;letter-spacing:0.846px;-webkit-text-stroke:0.39px #111112;">August 4, 2025</span><div class="b" style="left:3226.50px;top:805.89px;width:103.10px;height:45.50px;background:#e9f9da;border:2px solid #b0e57a;border-radius:8px"></div><span id="r3_b" class="t" style="left:3244.00px;top:816.61px;font-size:24.71px;line-height:24.71px;font-weight:400;color:#2b5a10;letter-spacing:0.520px;-webkit-text-stroke:1.04px #2b5a10;">Active</span><div class="b" style="left:3563.40px;top:826.39px;width:4.40px;height:4.40px;background:#1a1a1a;border-radius:50%"></div><div class="b" style="left:3576.50px;top:826.39px;width:4.40px;height:4.40px;background:#1a1a1a;border-radius:50%"></div><div class="b" style="left:3589.60px;top:826.39px;width:4.40px;height:4.40px;background:#1a1a1a;border-radius:50%"></div><div class="b" style="left:626.00px;top:874.92px;width:3083.80px;height:92.23px;background:#f8f9fb"></div><div class="b" style="left:626.00px;top:967.15px;width:3083.80px;height:2.00px;background:#e5e7ea"></div><div class="b" style="left:672.00px;top:902.22px;width:39.00px;height:39.00px;background:#ffffff;border:2px solid #cdcdcf;border-radius:4px"></div><span id="r4_name" class="t" style="left:734.00px;top:907.83px;font-size:27.76px;line-height:27.76px;font-weight:400;color:#111112;letter-spacing:0.474px;-webkit-text-stroke:0.39px #111112;">Small Business Owner</span><div class="b" style="left:1256.80px;top:899.42px;width:160.20px;height:45.80px;background:#ffffff;border:2px solid #d3d4d6;border-radius:7px"></div><span id="r4_sc" class="t" style="left:1272.00px;top:909.53px;font-size:24.85px;line-height:24.85px;font-weight:400;color:#333436;letter-spacing:0.089px;-webkit-text-stroke:0.75px #333436;">Schedule C</span><div class="b" style="left:1433.80px;top:899.42px;width:92.40px;height:45.80px;background:#ffffff;border:2px solid #d3d4d6;border-radius:7px"></div><span id="r4_ba" class="t" style="left:1449.00px;top:909.53px;font-size:24.85px;line-height:24.85px;font-weight:400;color:#333436;letter-spacing:0.100px;-webkit-text-stroke:0.75px #333436;">Basic</span><div class="b" style="left:1543.70px;top:899.42px;width:158.40px;height:45.80px;background:#ffffff;border:2px solid #d3d4d6;border-radius:7px"></div><span id="r4_inv" class="t" style="left:1558.00px;top:909.53px;font-size:24.85px;line-height:24.85px;font-weight:400;color:#333436;letter-spacing:0.556px;-webkit-text-stroke:0.75px #333436;">Investment</span><span id="r4_more" class="t" style="left:1719.00px;top:908.12px;font-size:26.16px;line-height:26.16px;font-weight:400;color:#0b5cb8;letter-spacing:-0.633px;-webkit-text-stroke:0.78px #0b5cb8;">+2 More</span><span id="r4_s" class="t" style="left:2109.00px;top:908.12px;font-size:27.62px;line-height:27.62px;font-weight:400;color:#111112;letter-spacing:-2.200px;-webkit-text-stroke:0.39px #111112;">12</span><span id="r4_q" class="t" style="left:2432.50px;top:908.12px;font-size:27.62px;line-height:27.62px;font-weight:400;color:#111112;letter-spacing:-0.400px;-webkit-text-stroke:0.39px #111112;">12</span><span id="r4_d" class="t" style="left:2561.00px;top:907.83px;font-size:27.76px;line-height:27.76px;font-weight:400;color:#111112;letter-spacing:0.846px;-webkit-text-stroke:0.39px #111112;">August 4, 2025</span><div class="b" style="left:3226.50px;top:899.62px;width:103.10px;height:45.50px;background:#e9f9da;border:2px solid #b0e57a;border-radius:8px"></div><span id="r4_b" class="t" style="left:3244.00px;top:910.33px;font-size:24.71px;line-height:24.71px;font-weight:400;color:#2b5a10;letter-spacing:0.520px;-webkit-text-stroke:1.04px #2b5a10;">Active</span><div class="b" style="left:3563.40px;top:920.12px;width:4.40px;height:4.40px;background:#1a1a1a;border-radius:50%"></div><div class="b" style="left:3576.50px;top:920.12px;width:4.40px;height:4.40px;background:#1a1a1a;border-radius:50%"></div><div class="b" style="left:3589.60px;top:920.12px;width:4.40px;height:4.40px;background:#1a1a1a;border-radius:50%"></div><div class="b" style="left:626.00px;top:1060.88px;width:3083.80px;height:2.00px;background:#e5e7ea"></div><div class="b" style="left:672.00px;top:995.95px;width:39.00px;height:39.00px;background:#ffffff;border:2px solid #cdcdcf;border-radius:4px"></div><span id="r5_name" class="t" style="left:734.00px;top:1001.57px;font-size:27.76px;line-height:27.76px;font-weight:400;color:#111112;letter-spacing:0.474px;-webkit-text-stroke:0.39px #111112;">Small Business Owner</span><div class="b" style="left:1256.80px;top:993.15px;width:160.20px;height:45.80px;background:#ffffff;border:2px solid #d3d4d6;border-radius:7px"></div><span id="r5_sc" class="t" style="left:1272.00px;top:1003.25px;font-size:24.85px;line-height:24.85px;font-weight:400;color:#333436;letter-spacing:0.089px;-webkit-text-stroke:0.75px #333436;">Schedule C</span><div class="b" style="left:1433.80px;top:993.15px;width:92.40px;height:45.80px;background:#ffffff;border:2px solid #d3d4d6;border-radius:7px"></div><span id="r5_ba" class="t" style="left:1449.00px;top:1003.25px;font-size:24.85px;line-height:24.85px;font-weight:400;color:#333436;letter-spacing:0.100px;-webkit-text-stroke:0.75px #333436;">Basic</span><div class="b" style="left:1543.70px;top:993.15px;width:158.40px;height:45.80px;background:#ffffff;border:2px solid #d3d4d6;border-radius:7px"></div><span id="r5_inv" class="t" style="left:1558.00px;top:1003.25px;font-size:24.85px;line-height:24.85px;font-weight:400;color:#333436;letter-spacing:0.556px;-webkit-text-stroke:0.75px #333436;">Investment</span><span id="r5_more" class="t" style="left:1719.00px;top:1001.85px;font-size:26.16px;line-height:26.16px;font-weight:400;color:#0b5cb8;letter-spacing:-0.633px;-webkit-text-stroke:0.78px #0b5cb8;">+2 More</span><span id="r5_s" class="t" style="left:2109.00px;top:1001.86px;font-size:27.62px;line-height:27.62px;font-weight:400;color:#111112;letter-spacing:-2.200px;-webkit-text-stroke:0.39px #111112;">12</span><span id="r5_q" class="t" style="left:2432.50px;top:1001.86px;font-size:27.62px;line-height:27.62px;font-weight:400;color:#111112;letter-spacing:-0.400px;-webkit-text-stroke:0.39px #111112;">12</span><span id="r5_d" class="t" style="left:2561.00px;top:1001.57px;font-size:27.76px;line-height:27.76px;font-weight:400;color:#111112;letter-spacing:0.846px;-webkit-text-stroke:0.39px #111112;">August 4, 2025</span><div class="b" style="left:3212.50px;top:993.35px;width:131.60px;height:45.50px;background:#f1f1f2;border:2px solid #cbcccd;border-radius:8px"></div><span id="r5_b" class="t" style="left:3229.50px;top:1004.07px;font-size:24.71px;line-height:24.71px;font-weight:400;color:#343537;letter-spacing:0.429px;-webkit-text-stroke:1.04px #343537;">Archived</span><div class="b" style="left:3563.40px;top:1013.85px;width:4.40px;height:4.40px;background:#1a1a1a;border-radius:50%"></div><div class="b" style="left:3576.50px;top:1013.85px;width:4.40px;height:4.40px;background:#1a1a1a;border-radius:50%"></div><div class="b" style="left:3589.60px;top:1013.85px;width:4.40px;height:4.40px;background:#1a1a1a;border-radius:50%"></div><div class="b" style="left:626.00px;top:1062.38px;width:3083.80px;height:92.23px;background:#f8f9fb"></div><div class="b" style="left:626.00px;top:1154.61px;width:3083.80px;height:2.00px;background:#e5e7ea"></div><div class="b" style="left:672.00px;top:1089.68px;width:39.00px;height:39.00px;background:#ffffff;border:2px solid #cdcdcf;border-radius:4px"></div><span id="r6_name" class="t" style="left:734.00px;top:1095.29px;font-size:27.76px;line-height:27.76px;font-weight:400;color:#111112;letter-spacing:0.474px;-webkit-text-stroke:0.39px #111112;">Small Business Owner</span><div class="b" style="left:1256.80px;top:1086.88px;width:160.20px;height:45.80px;background:#ffffff;border:2px solid #d3d4d6;border-radius:7px"></div><span id="r6_sc" class="t" style="left:1272.00px;top:1096.99px;font-size:24.85px;line-height:24.85px;font-weight:400;color:#333436;letter-spacing:0.089px;-webkit-text-stroke:0.75px #333436;">Schedule C</span><div class="b" style="left:1433.80px;top:1086.88px;width:92.40px;height:45.80px;background:#ffffff;border:2px solid #d3d4d6;border-radius:7px"></div><span id="r6_ba" class="t" style="left:1449.00px;top:1096.99px;font-size:24.85px;line-height:24.85px;font-weight:400;color:#333436;letter-spacing:0.100px;-webkit-text-stroke:0.75px #333436;">Basic</span><div class="b" style="left:1543.70px;top:1086.88px;width:158.40px;height:45.80px;background:#ffffff;border:2px solid #d3d4d6;border-radius:7px"></div><span id="r6_inv" class="t" style="left:1558.00px;top:1096.99px;font-size:24.85px;line-height:24.85px;font-weight:400;color:#333436;letter-spacing:0.556px;-webkit-text-stroke:0.75px #333436;">Investment</span><span id="r6_more" class="t" style="left:1719.00px;top:1095.58px;font-size:26.16px;line-height:26.16px;font-weight:400;color:#0b5cb8;letter-spacing:-0.633px;-webkit-text-stroke:0.78px #0b5cb8;">+2 More</span><span id="r6_s" class="t" style="left:2109.00px;top:1095.58px;font-size:27.62px;line-height:27.62px;font-weight:400;color:#111112;letter-spacing:-2.200px;-webkit-text-stroke:0.39px #111112;">12</span><span id="r6_q" class="t" style="left:2432.50px;top:1095.58px;font-size:27.62px;line-height:27.62px;font-weight:400;color:#111112;letter-spacing:-0.400px;-webkit-text-stroke:0.39px #111112;">12</span><span id="r6_d" class="t" style="left:2561.00px;top:1095.29px;font-size:27.76px;line-height:27.76px;font-weight:400;color:#111112;letter-spacing:0.846px;-webkit-text-stroke:0.39px #111112;">August 4, 2025</span><div class="b" style="left:3226.50px;top:1087.08px;width:103.10px;height:45.50px;background:#e9f9da;border:2px solid #b0e57a;border-radius:8px"></div><span id="r6_b" class="t" style="left:3244.00px;top:1097.79px;font-size:24.71px;line-height:24.71px;font-weight:400;color:#2b5a10;letter-spacing:0.520px;-webkit-text-stroke:1.04px #2b5a10;">Active</span><div class="b" style="left:3563.40px;top:1107.58px;width:4.40px;height:4.40px;background:#1a1a1a;border-radius:50%"></div><div class="b" style="left:3576.50px;top:1107.58px;width:4.40px;height:4.40px;background:#1a1a1a;border-radius:50%"></div><div class="b" style="left:3589.60px;top:1107.58px;width:4.40px;height:4.40px;background:#1a1a1a;border-radius:50%"></div><div class="b" style="left:626.00px;top:1248.34px;width:3083.80px;height:2.00px;background:#e5e7ea"></div><div class="b" style="left:672.00px;top:1183.41px;width:39.00px;height:39.00px;background:#ffffff;border:2px solid #cdcdcf;border-radius:4px"></div><span id="r7_name" class="t" style="left:734.00px;top:1189.02px;font-size:27.76px;line-height:27.76px;font-weight:400;color:#111112;letter-spacing:0.474px;-webkit-text-stroke:0.39px #111112;">Small Business Owner</span><div class="b" style="left:1256.80px;top:1180.61px;width:160.20px;height:45.80px;background:#ffffff;border:2px solid #d3d4d6;border-radius:7px"></div><span id="r7_sc" class="t" style="left:1272.00px;top:1190.71px;font-size:24.85px;line-height:24.85px;font-weight:400;color:#333436;letter-spacing:0.089px;-webkit-text-stroke:0.75px #333436;">Schedule C</span><div class="b" style="left:1433.80px;top:1180.61px;width:92.40px;height:45.80px;background:#ffffff;border:2px solid #d3d4d6;border-radius:7px"></div><span id="r7_ba" class="t" style="left:1449.00px;top:1190.71px;font-size:24.85px;line-height:24.85px;font-weight:400;color:#333436;letter-spacing:0.100px;-webkit-text-stroke:0.75px #333436;">Basic</span><div class="b" style="left:1543.70px;top:1180.61px;width:158.40px;height:45.80px;background:#ffffff;border:2px solid #d3d4d6;border-radius:7px"></div><span id="r7_inv" class="t" style="left:1558.00px;top:1190.71px;font-size:24.85px;line-height:24.85px;font-weight:400;color:#333436;letter-spacing:0.556px;-webkit-text-stroke:0.75px #333436;">Investment</span><span id="r7_more" class="t" style="left:1719.00px;top:1189.32px;font-size:26.16px;line-height:26.16px;font-weight:400;color:#0b5cb8;letter-spacing:-0.633px;-webkit-text-stroke:0.78px #0b5cb8;">+2 More</span><span id="r7_s" class="t" style="left:2109.00px;top:1189.32px;font-size:27.62px;line-height:27.62px;font-weight:400;color:#111112;letter-spacing:-2.200px;-webkit-text-stroke:0.39px #111112;">12</span><span id="r7_q" class="t" style="left:2432.50px;top:1189.32px;font-size:27.62px;line-height:27.62px;font-weight:400;color:#111112;letter-spacing:-0.400px;-webkit-text-stroke:0.39px #111112;">12</span><span id="r7_d" class="t" style="left:2561.00px;top:1189.02px;font-size:27.76px;line-height:27.76px;font-weight:400;color:#111112;letter-spacing:0.846px;-webkit-text-stroke:0.39px #111112;">August 4, 2025</span><div class="b" style="left:3226.50px;top:1180.81px;width:103.10px;height:45.50px;background:#e9f9da;border:2px solid #b0e57a;border-radius:8px"></div><span id="r7_b" class="t" style="left:3244.00px;top:1191.51px;font-size:24.71px;line-height:24.71px;font-weight:400;color:#2b5a10;letter-spacing:0.520px;-webkit-text-stroke:1.04px #2b5a10;">Active</span><div class="b" style="left:3563.40px;top:1201.31px;width:4.40px;height:4.40px;background:#1a1a1a;border-radius:50%"></div><div class="b" style="left:3576.50px;top:1201.31px;width:4.40px;height:4.40px;background:#1a1a1a;border-radius:50%"></div><div class="b" style="left:3589.60px;top:1201.31px;width:4.40px;height:4.40px;background:#1a1a1a;border-radius:50%"></div><div class="b" style="left:626.00px;top:1249.84px;width:3083.80px;height:92.23px;background:#f8f9fb"></div><div class="b" style="left:626.00px;top:1342.07px;width:3083.80px;height:2.00px;background:#e5e7ea"></div><div class="b" style="left:672.00px;top:1277.14px;width:39.00px;height:39.00px;background:#ffffff;border:2px solid #cdcdcf;border-radius:4px"></div><span id="r8_name" class="t" style="left:734.00px;top:1282.75px;font-size:27.76px;line-height:27.76px;font-weight:400;color:#111112;letter-spacing:0.474px;-webkit-text-stroke:0.39px #111112;">Small Business Owner</span><div class="b" style="left:1256.80px;top:1274.34px;width:160.20px;height:45.80px;background:#ffffff;border:2px solid #d3d4d6;border-radius:7px"></div><span id="r8_sc" class="t" style="left:1272.00px;top:1284.45px;font-size:24.85px;line-height:24.85px;font-weight:400;color:#333436;letter-spacing:0.089px;-webkit-text-stroke:0.75px #333436;">Schedule C</span><div class="b" style="left:1433.80px;top:1274.34px;width:92.40px;height:45.80px;background:#ffffff;border:2px solid #d3d4d6;border-radius:7px"></div><span id="r8_ba" class="t" style="left:1449.00px;top:1284.45px;font-size:24.85px;line-height:24.85px;font-weight:400;color:#333436;letter-spacing:0.100px;-webkit-text-stroke:0.75px #333436;">Basic</span><div class="b" style="left:1543.70px;top:1274.34px;width:158.40px;height:45.80px;background:#ffffff;border:2px solid #d3d4d6;border-radius:7px"></div><span id="r8_inv" class="t" style="left:1558.00px;top:1284.45px;font-size:24.85px;line-height:24.85px;font-weight:400;color:#333436;letter-spacing:0.556px;-webkit-text-stroke:0.75px #333436;">Investment</span><span id="r8_more" class="t" style="left:1719.00px;top:1283.04px;font-size:26.16px;line-height:26.16px;font-weight:400;color:#0b5cb8;letter-spacing:-0.633px;-webkit-text-stroke:0.78px #0b5cb8;">+2 More</span><span id="r8_s" class="t" style="left:2109.00px;top:1283.04px;font-size:27.62px;line-height:27.62px;font-weight:400;color:#111112;letter-spacing:-2.200px;-webkit-text-stroke:0.39px #111112;">12</span><span id="r8_q" class="t" style="left:2432.50px;top:1283.04px;font-size:27.62px;line-height:27.62px;font-weight:400;color:#111112;letter-spacing:-0.400px;-webkit-text-stroke:0.39px #111112;">12</span><span id="r8_d" class="t" style="left:2561.00px;top:1282.75px;font-size:27.76px;line-height:27.76px;font-weight:400;color:#111112;letter-spacing:0.846px;-webkit-text-stroke:0.39px #111112;">August 4, 2025</span><div class="b" style="left:3226.50px;top:1274.54px;width:103.10px;height:45.50px;background:#e9f9da;border:2px solid #b0e57a;border-radius:8px"></div><span id="r8_b" class="t" style="left:3244.00px;top:1285.25px;font-size:24.71px;line-height:24.71px;font-weight:400;color:#2b5a10;letter-spacing:0.520px;-webkit-text-stroke:1.04px #2b5a10;">Active</span><div class="b" style="left:3563.40px;top:1295.04px;width:4.40px;height:4.40px;background:#1a1a1a;border-radius:50%"></div><div class="b" style="left:3576.50px;top:1295.04px;width:4.40px;height:4.40px;background:#1a1a1a;border-radius:50%"></div><div class="b" style="left:3589.60px;top:1295.04px;width:4.40px;height:4.40px;background:#1a1a1a;border-radius:50%"></div><div class="b" style="left:626.00px;top:1435.80px;width:3083.80px;height:2.00px;background:#e5e7ea"></div><div class="b" style="left:672.00px;top:1370.87px;width:39.00px;height:39.00px;background:#ffffff;border:2px solid #cdcdcf;border-radius:4px"></div><span id="r9_name" class="t" style="left:734.00px;top:1376.48px;font-size:27.76px;line-height:27.76px;font-weight:400;color:#111112;letter-spacing:0.474px;-webkit-text-stroke:0.39px #111112;">Small Business Owner</span><div class="b" style="left:1256.80px;top:1368.07px;width:160.20px;height:45.80px;background:#ffffff;border:2px solid #d3d4d6;border-radius:7px"></div><span id="r9_sc" class="t" style="left:1272.00px;top:1378.17px;font-size:24.85px;line-height:24.85px;font-weight:400;color:#333436;letter-spacing:0.089px;-webkit-text-stroke:0.75px #333436;">Schedule C</span><div class="b" style="left:1433.80px;top:1368.07px;width:92.40px;height:45.80px;background:#ffffff;border:2px solid #d3d4d6;border-radius:7px"></div><span id="r9_ba" class="t" style="left:1449.00px;top:1378.17px;font-size:24.85px;line-height:24.85px;font-weight:400;color:#333436;letter-spacing:0.100px;-webkit-text-stroke:0.75px #333436;">Basic</span><div class="b" style="left:1543.70px;top:1368.07px;width:158.40px;height:45.80px;background:#ffffff;border:2px solid #d3d4d6;border-radius:7px"></div><span id="r9_inv" class="t" style="left:1558.00px;top:1378.17px;font-size:24.85px;line-height:24.85px;font-weight:400;color:#333436;letter-spacing:0.556px;-webkit-text-stroke:0.75px #333436;">Investment</span><span id="r9_more" class="t" style="left:1719.00px;top:1376.78px;font-size:26.16px;line-height:26.16px;font-weight:400;color:#0b5cb8;letter-spacing:-0.633px;-webkit-text-stroke:0.78px #0b5cb8;">+2 More</span><span id="r9_s" class="t" style="left:2109.00px;top:1376.78px;font-size:27.62px;line-height:27.62px;font-weight:400;color:#111112;letter-spacing:-2.200px;-webkit-text-stroke:0.39px #111112;">12</span><span id="r9_q" class="t" style="left:2432.50px;top:1376.78px;font-size:27.62px;line-height:27.62px;font-weight:400;color:#111112;letter-spacing:-0.400px;-webkit-text-stroke:0.39px #111112;">12</span><span id="r9_d" class="t" style="left:2561.00px;top:1376.48px;font-size:27.76px;line-height:27.76px;font-weight:400;color:#111112;letter-spacing:0.846px;-webkit-text-stroke:0.39px #111112;">August 4, 2025</span><div class="b" style="left:3212.50px;top:1368.27px;width:131.60px;height:45.50px;background:#f1f1f2;border:2px solid #cbcccd;border-radius:8px"></div><span id="r9_b" class="t" style="left:3229.50px;top:1378.98px;font-size:24.71px;line-height:24.71px;font-weight:400;color:#343537;letter-spacing:0.429px;-webkit-text-stroke:1.04px #343537;">Archived</span><div class="b" style="left:3563.40px;top:1388.77px;width:4.40px;height:4.40px;background:#1a1a1a;border-radius:50%"></div><div class="b" style="left:3576.50px;top:1388.77px;width:4.40px;height:4.40px;background:#1a1a1a;border-radius:50%"></div><div class="b" style="left:3589.60px;top:1388.77px;width:4.40px;height:4.40px;background:#1a1a1a;border-radius:50%"></div><div class="b" style="left:626.00px;top:1437.30px;width:3083.80px;height:92.23px;background:#f8f9fb"></div><div class="b" style="left:626.00px;top:1529.53px;width:3083.80px;height:2.00px;background:#e5e7ea"></div><div class="b" style="left:672.00px;top:1464.60px;width:39.00px;height:39.00px;background:#ffffff;border:2px solid #cdcdcf;border-radius:4px"></div><span id="r10_name" class="t" style="left:734.00px;top:1470.21px;font-size:27.76px;line-height:27.76px;font-weight:400;color:#111112;letter-spacing:0.474px;-webkit-text-stroke:0.39px #111112;">Small Business Owner</span><div class="b" style="left:1256.80px;top:1461.80px;width:160.20px;height:45.80px;background:#ffffff;border:2px solid #d3d4d6;border-radius:7px"></div><span id="r10_sc" class="t" style="left:1272.00px;top:1471.91px;font-size:24.85px;line-height:24.85px;font-weight:400;color:#333436;letter-spacing:0.089px;-webkit-text-stroke:0.75px #333436;">Schedule C</span><div class="b" style="left:1433.80px;top:1461.80px;width:92.40px;height:45.80px;background:#ffffff;border:2px solid #d3d4d6;border-radius:7px"></div><span id="r10_ba" class="t" style="left:1449.00px;top:1471.91px;font-size:24.85px;line-height:24.85px;font-weight:400;color:#333436;letter-spacing:0.100px;-webkit-text-stroke:0.75px #333436;">Basic</span><div class="b" style="left:1543.70px;top:1461.80px;width:158.40px;height:45.80px;background:#ffffff;border:2px solid #d3d4d6;border-radius:7px"></div><span id="r10_inv" class="t" style="left:1558.00px;top:1471.91px;font-size:24.85px;line-height:24.85px;font-weight:400;color:#333436;letter-spacing:0.556px;-webkit-text-stroke:0.75px #333436;">Investment</span><span id="r10_more" class="t" style="left:1719.00px;top:1470.50px;font-size:26.16px;line-height:26.16px;font-weight:400;color:#0b5cb8;letter-spacing:-0.633px;-webkit-text-stroke:0.78px #0b5cb8;">+2 More</span><span id="r10_s" class="t" style="left:2109.00px;top:1470.50px;font-size:27.62px;line-height:27.62px;font-weight:400;color:#111112;letter-spacing:-2.200px;-webkit-text-stroke:0.39px #111112;">12</span><span id="r10_q" class="t" style="left:2432.50px;top:1470.50px;font-size:27.62px;line-height:27.62px;font-weight:400;color:#111112;letter-spacing:-0.400px;-webkit-text-stroke:0.39px #111112;">12</span><span id="r10_d" class="t" style="left:2561.00px;top:1470.21px;font-size:27.76px;line-height:27.76px;font-weight:400;color:#111112;letter-spacing:0.846px;-webkit-text-stroke:0.39px #111112;">August 4, 2025</span><div class="b" style="left:3226.50px;top:1462.00px;width:103.10px;height:45.50px;background:#e9f9da;border:2px solid #b0e57a;border-radius:8px"></div><span id="r10_b" class="t" style="left:3244.00px;top:1472.71px;font-size:24.71px;line-height:24.71px;font-weight:400;color:#2b5a10;letter-spacing:0.520px;-webkit-text-stroke:1.04px #2b5a10;">Active</span><div class="b" style="left:3563.40px;top:1482.50px;width:4.40px;height:4.40px;background:#1a1a1a;border-radius:50%"></div><div class="b" style="left:3576.50px;top:1482.50px;width:4.40px;height:4.40px;background:#1a1a1a;border-radius:50%"></div><div class="b" style="left:3589.60px;top:1482.50px;width:4.40px;height:4.40px;background:#1a1a1a;border-radius:50%"></div><div class="b" style="left:626.00px;top:1623.26px;width:3083.80px;height:2.00px;background:#e5e7ea"></div><div class="b" style="left:672.00px;top:1558.33px;width:39.00px;height:39.00px;background:#ffffff;border:2px solid #cdcdcf;border-radius:4px"></div><span id="r11_name" class="t" style="left:734.00px;top:1563.93px;font-size:27.76px;line-height:27.76px;font-weight:400;color:#111112;letter-spacing:0.474px;-webkit-text-stroke:0.39px #111112;">Small Business Owner</span><div class="b" style="left:1256.80px;top:1555.53px;width:160.20px;height:45.80px;background:#ffffff;border:2px solid #d3d4d6;border-radius:7px"></div><span id="r11_sc" class="t" style="left:1272.00px;top:1565.65px;font-size:24.85px;line-height:24.85px;font-weight:400;color:#333436;letter-spacing:0.089px;-webkit-text-stroke:0.75px #333436;">Schedule C</span><div class="b" style="left:1433.80px;top:1555.53px;width:92.40px;height:45.80px;background:#ffffff;border:2px solid #d3d4d6;border-radius:7px"></div><span id="r11_ba" class="t" style="left:1449.00px;top:1565.65px;font-size:24.85px;line-height:24.85px;font-weight:400;color:#333436;letter-spacing:0.100px;-webkit-text-stroke:0.75px #333436;">Basic</span><div class="b" style="left:1543.70px;top:1555.53px;width:158.40px;height:45.80px;background:#ffffff;border:2px solid #d3d4d6;border-radius:7px"></div><span id="r11_inv" class="t" style="left:1558.00px;top:1565.65px;font-size:24.85px;line-height:24.85px;font-weight:400;color:#333436;letter-spacing:0.556px;-webkit-text-stroke:0.75px #333436;">Investment</span><span id="r11_more" class="t" style="left:1719.00px;top:1564.24px;font-size:26.16px;line-height:26.16px;font-weight:400;color:#0b5cb8;letter-spacing:-0.633px;-webkit-text-stroke:0.78px #0b5cb8;">+2 More</span><span id="r11_s" class="t" style="left:2109.00px;top:1564.24px;font-size:27.62px;line-height:27.62px;font-weight:400;color:#111112;letter-spacing:-2.200px;-webkit-text-stroke:0.39px #111112;">12</span><span id="r11_q" class="t" style="left:2432.50px;top:1564.24px;font-size:27.62px;line-height:27.62px;font-weight:400;color:#111112;letter-spacing:-0.400px;-webkit-text-stroke:0.39px #111112;">12</span><span id="r11_d" class="t" style="left:2561.00px;top:1563.93px;font-size:27.76px;line-height:27.76px;font-weight:400;color:#111112;letter-spacing:0.846px;-webkit-text-stroke:0.39px #111112;">August 4, 2025</span><div class="b" style="left:3226.50px;top:1555.73px;width:103.10px;height:45.50px;background:#e9f9da;border:2px solid #b0e57a;border-radius:8px"></div><span id="r11_b" class="t" style="left:3244.00px;top:1566.43px;font-size:24.71px;line-height:24.71px;font-weight:400;color:#2b5a10;letter-spacing:0.520px;-webkit-text-stroke:1.04px #2b5a10;">Active</span><div class="b" style="left:3563.40px;top:1576.23px;width:4.40px;height:4.40px;background:#1a1a1a;border-radius:50%"></div><div class="b" style="left:3576.50px;top:1576.23px;width:4.40px;height:4.40px;background:#1a1a1a;border-radius:50%"></div><div class="b" style="left:3589.60px;top:1576.23px;width:4.40px;height:4.40px;background:#1a1a1a;border-radius:50%"></div><div class="b" style="left:626.00px;top:1624.76px;width:3083.80px;height:92.23px;background:#f8f9fb"></div><div class="b" style="left:626.00px;top:1716.99px;width:3083.80px;height:2.00px;background:#e5e7ea"></div><div class="b" style="left:672.00px;top:1652.06px;width:39.00px;height:39.00px;background:#ffffff;border:2px solid #cdcdcf;border-radius:4px"></div><span id="r12_name" class="t" style="left:734.00px;top:1657.67px;font-size:27.76px;line-height:27.76px;font-weight:400;color:#111112;letter-spacing:0.474px;-webkit-text-stroke:0.39px #111112;">Small Business Owner</span><div class="b" style="left:1256.80px;top:1649.26px;width:160.20px;height:45.80px;background:#ffffff;border:2px solid #d3d4d6;border-radius:7px"></div><span id="r12_sc" class="t" style="left:1272.00px;top:1659.37px;font-size:24.85px;line-height:24.85px;font-weight:400;color:#333436;letter-spacing:0.089px;-webkit-text-stroke:0.75px #333436;">Schedule C</span><div class="b" style="left:1433.80px;top:1649.26px;width:92.40px;height:45.80px;background:#ffffff;border:2px solid #d3d4d6;border-radius:7px"></div><span id="r12_ba" class="t" style="left:1449.00px;top:1659.37px;font-size:24.85px;line-height:24.85px;font-weight:400;color:#333436;letter-spacing:0.100px;-webkit-text-stroke:0.75px #333436;">Basic</span><div class="b" style="left:1543.70px;top:1649.26px;width:158.40px;height:45.80px;background:#ffffff;border:2px solid #d3d4d6;border-radius:7px"></div><span id="r12_inv" class="t" style="left:1558.00px;top:1659.37px;font-size:24.85px;line-height:24.85px;font-weight:400;color:#333436;letter-spacing:0.556px;-webkit-text-stroke:0.75px #333436;">Investment</span><span id="r12_more" class="t" style="left:1719.00px;top:1657.96px;font-size:26.16px;line-height:26.16px;font-weight:400;color:#0b5cb8;letter-spacing:-0.633px;-webkit-text-stroke:0.78px #0b5cb8;">+2 More</span><span id="r12_s" class="t" style="left:2109.00px;top:1657.96px;font-size:27.62px;line-height:27.62px;font-weight:400;color:#111112;letter-spacing:-2.200px;-webkit-text-stroke:0.39px #111112;">12</span><span id="r12_q" class="t" style="left:2432.50px;top:1657.96px;font-size:27.62px;line-height:27.62px;font-weight:400;color:#111112;letter-spacing:-0.400px;-webkit-text-stroke:0.39px #111112;">12</span><span id="r12_d" class="t" style="left:2561.00px;top:1657.67px;font-size:27.76px;line-height:27.76px;font-weight:400;color:#111112;letter-spacing:0.846px;-webkit-text-stroke:0.39px #111112;">August 4, 2025</span><div class="b" style="left:3226.50px;top:1649.46px;width:103.10px;height:45.50px;background:#e9f9da;border:2px solid #b0e57a;border-radius:8px"></div><span id="r12_b" class="t" style="left:3244.00px;top:1660.17px;font-size:24.71px;line-height:24.71px;font-weight:400;color:#2b5a10;letter-spacing:0.520px;-webkit-text-stroke:1.04px #2b5a10;">Active</span><div class="b" style="left:3563.40px;top:1669.96px;width:4.40px;height:4.40px;background:#1a1a1a;border-radius:50%"></div><div class="b" style="left:3576.50px;top:1669.96px;width:4.40px;height:4.40px;background:#1a1a1a;border-radius:50%"></div><div class="b" style="left:3589.60px;top:1669.96px;width:4.40px;height:4.40px;background:#1a1a1a;border-radius:50%"></div><div class="b" style="left:672.00px;top:1745.79px;width:39.00px;height:39.00px;background:#ffffff;border:2px solid #cdcdcf;border-radius:4px"></div><span id="r13_name" class="t" style="left:734.00px;top:1751.40px;font-size:27.76px;line-height:27.76px;font-weight:400;color:#111112;letter-spacing:0.474px;-webkit-text-stroke:0.39px #111112;">Small Business Owner</span><div class="b" style="left:1256.80px;top:1742.99px;width:160.20px;height:45.80px;background:#ffffff;border:2px solid #d3d4d6;border-radius:7px"></div><span id="r13_sc" class="t" style="left:1272.00px;top:1753.09px;font-size:24.85px;line-height:24.85px;font-weight:400;color:#333436;letter-spacing:0.089px;-webkit-text-stroke:0.75px #333436;">Schedule C</span><div class="b" style="left:1433.80px;top:1742.99px;width:92.40px;height:45.80px;background:#ffffff;border:2px solid #d3d4d6;border-radius:7px"></div><span id="r13_ba" class="t" style="left:1449.00px;top:1753.09px;font-size:24.85px;line-height:24.85px;font-weight:400;color:#333436;letter-spacing:0.100px;-webkit-text-stroke:0.75px #333436;">Basic</span><div class="b" style="left:1543.70px;top:1742.99px;width:158.40px;height:45.80px;background:#ffffff;border:2px solid #d3d4d6;border-radius:7px"></div><span id="r13_inv" class="t" style="left:1558.00px;top:1753.09px;font-size:24.85px;line-height:24.85px;font-weight:400;color:#333436;letter-spacing:0.556px;-webkit-text-stroke:0.75px #333436;">Investment</span><span id="r13_more" class="t" style="left:1719.00px;top:1751.70px;font-size:26.16px;line-height:26.16px;font-weight:400;color:#0b5cb8;letter-spacing:-0.633px;-webkit-text-stroke:0.78px #0b5cb8;">+2 More</span><span id="r13_s" class="t" style="left:2109.00px;top:1751.70px;font-size:27.62px;line-height:27.62px;font-weight:400;color:#111112;letter-spacing:-2.200px;-webkit-text-stroke:0.39px #111112;">12</span><span id="r13_q" class="t" style="left:2432.50px;top:1751.70px;font-size:27.62px;line-height:27.62px;font-weight:400;color:#111112;letter-spacing:-0.400px;-webkit-text-stroke:0.39px #111112;">12</span><span id="r13_d" class="t" style="left:2561.00px;top:1751.40px;font-size:27.76px;line-height:27.76px;font-weight:400;color:#111112;letter-spacing:0.846px;-webkit-text-stroke:0.39px #111112;">August 4, 2025</span><div class="b" style="left:3226.50px;top:1743.19px;width:103.10px;height:45.50px;background:#e9f9da;border:2px solid #b0e57a;border-radius:8px"></div><span id="r13_b" class="t" style="left:3244.00px;top:1753.90px;font-size:24.71px;line-height:24.71px;font-weight:400;color:#2b5a10;letter-spacing:0.520px;-webkit-text-stroke:1.04px #2b5a10;">Active</span><div class="b" style="left:3563.40px;top:1763.69px;width:4.40px;height:4.40px;background:#1a1a1a;border-radius:50%"></div><div class="b" style="left:3576.50px;top:1763.69px;width:4.40px;height:4.40px;background:#1a1a1a;border-radius:50%"></div><div class="b" style="left:3589.60px;top:1763.69px;width:4.40px;height:4.40px;background:#1a1a1a;border-radius:50%"></div><span id="show" class="t" style="left:1886.00px;top:1865.01px;font-size:27.18px;line-height:27.18px;font-weight:400;color:#535456;letter-spacing:1.067px;-webkit-text-stroke:0.82px #535456;">Show</span><div class="b" style="left:1982.80px;top:1844.00px;width:168.70px;height:69.30px;background:#ffffff;border:2px solid #d0d0d2;border-radius:9px"></div><span id="pp14" class="t" style="left:2013.00px;top:1865.01px;font-size:27.18px;line-height:27.18px;font-weight:400;color:#151516;letter-spacing:-0.200px;-webkit-text-stroke:0.82px #151516;">14</span><svg style="position:absolute;left:2090.60px;top:1865.47px;width:29.60px;height:26.88px;overflow:visible" viewBox="0 0 256 256" preserveAspectRatio="none" fill="none" stroke="#1e1e1f" color="#1e1e1f" stroke-width="20.85" stroke-linecap="round" stroke-linejoin="round"><polyline points="208 96 128 176 48 96"/></svg><span id="rpp" class="t" style="left:2176.50px;top:1865.01px;font-size:27.18px;line-height:27.18px;font-weight:400;color:#535456;letter-spacing:1.267px;-webkit-text-stroke:0.82px #535456;">rows per page</span>
</div></body></html>
